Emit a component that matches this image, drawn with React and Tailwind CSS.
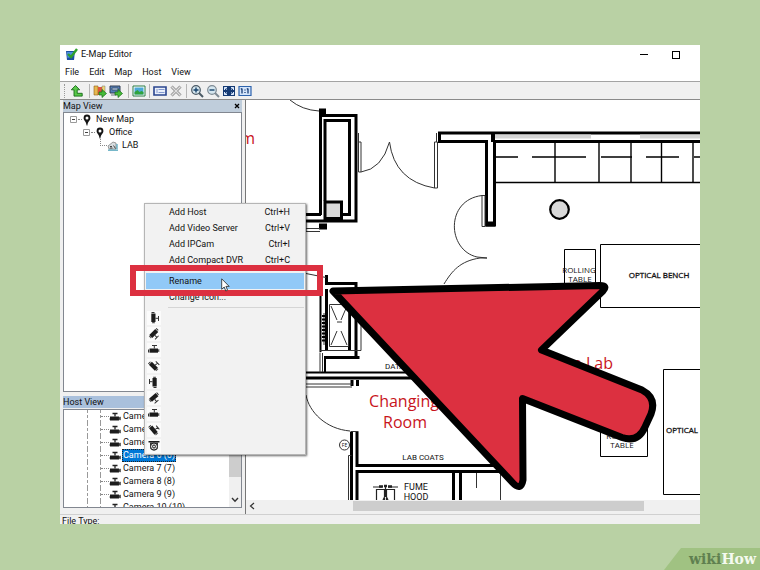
import React, { useState } from "react";

const MENUS = ["File", "Edit", "Map", "Host", "View"];

const HOST_ACTIONS = [
  { label: "Add Host", keys: "Ctrl+H" },
  { label: "Add Video Server", keys: "Ctrl+V" },
  { label: "Add IPCam", keys: "Ctrl+I" },
  { label: "Add Compact DVR", keys: "Ctrl+C" },
];

const CAMERA_ANGLES = [90, 135, 0, 45, -90, 140, 0, 50];

const CAMERAS = [3, 4, 5, 6, 7, 8, 9, 10];

function AppIcon() {
  return (
    <svg viewBox="0 0 13 13" className="h-[13px] w-[13px]">
      <path d="M1 3h9l-1 9H2z" fill="#1d4fa3" />
      <path d="M2 4l7 0-.5 4-6 2z" fill="#4b8fe0" />
      <path d="M3 6l3 3 6-8" fill="none" stroke="#2fa02c" strokeWidth="2.4" />
    </svg>
  );
}

function PinIcon() {
  return (
    <svg viewBox="0 0 8 12" className="h-3 w-2 shrink-0">
      <path d="M4 .5a3.4 3.4 0 0 1 3.4 3.4C7.4 6.500 4.600 7.500 4.400 11.500h-.8C3.400 7.500.6 6.500.6 3.900A3.400 3.400 0 0 1 4 .5z" fill="#151515" />
      <circle cx="4" cy="3.900" r="1.500" fill="#fff" />
    </svg>
  );
}

function LabIcon() {
  return (
    <svg viewBox="0 0 12 10" className="h-[10px] w-3 shrink-0">
      <path d="M1 5l5-4 3 1v6H2z" fill="#d8dde0" stroke="#777" strokeWidth=".7" />
      <path d="M3 5.500h2M3 7h2.500M6.500 4.500l2 3" stroke="#444" strokeWidth="1" />
      <path d="M1 9.200h10M10 3v5" stroke="#4aa0b8" strokeWidth="1.200" />
    </svg>
  );
}

function HostCamera() {
  return (
    <svg viewBox="0 0 12 10" className="h-[10px] w-3 shrink-0">
      <path d="M3.500 1.500h5M6 1.500v3" stroke="#222" strokeWidth="1.300" />
      <path d="M1 4.500h9v4H1z" fill="#1c1c1c" />
      <path d="M10 5.500l1.500-.5v3L10 7.500zM0 7h1" fill="#444" stroke="#444" strokeWidth=".6" />
    </svg>
  );
}

function MenuCamera({ angle }) {
  return (
    <svg viewBox="0 0 14 14" className="h-3.5 w-3.5">
      <rect width="14" height="14" fill="#fbfbfb" />
      <g transform={`rotate(${angle} 7 7)`}>
        <path d="M5 2.500h5M7.300 2.500v3M1.500 6.500v3" stroke="#333" strokeWidth="1" />
        <path d="M2.500 5.500h8.500v4.200H2.500z" fill="#1c1c1c" />
        <path d="M11 6.500l1.300-.6v3.200L11 8.700z" fill="#555" />
      </g>
    </svg>
  );
}

function DomeCamera() {
  return (
    <svg viewBox="0 0 14 14" className="h-3.5 w-3.5">
      <rect width="14" height="14" fill="#fbfbfb" />
      <path d="M1.500 2h11v1.500h-11z" fill="#1c1c1c" />
      <path d="M3 3.500h8v4a4 4 0 0 1-8 0z" fill="#333" />
      <circle cx="7" cy="7.500" r="3.500" fill="#ddd" stroke="#222" />
      <circle cx="7" cy="7.500" r="1.500" fill="none" stroke="#222" />
    </svg>
  );
}

function ToolButton({ label, children }) {
  return (
    <button type="button" aria-label={label} className="flex h-4 w-4 items-center justify-center">
      <svg viewBox="0 0 14 14" className="h-3.5 w-3.5">{children}</svg>
    </button>
  );
}

function Divider() {
  return <span className="mx-0.5 h-3.5 w-px bg-[#b5b5b5]" />;
}

function Toolbar() {
  return (
    <div className="flex h-[18px] items-center border-t border-[#a3a3a3] bg-[#f0f0f0] pl-1">
      <span className="mr-1 h-3.5 border-l border-dotted border-[#999]" />
      <ToolButton label="Up">
        <path d="M5.500 1.500l4.200 4.300H7.200V9.300h5v2.800H4V5.800H1.300z" fill="#58c848" stroke="#17691a" strokeWidth=".9" />
      </ToolButton>
      <span className="w-0.5" />
      <Divider />
      <ToolButton label="Add map">
        <path d="M1 2h4v9H1z" fill="#e6b84e" stroke="#8d5a19" strokeWidth=".6" />
        <path d="M5 3h4v8H5z" fill="#e0553b" />
        <path d="M9 2h3v6H9z" fill="#f0d774" stroke="#777" strokeWidth=".5" />
        <path d="M6 8h3V5.500l4.500 4-4.500 4V11H6z" fill="#46ba38" stroke="#146b16" strokeWidth=".7" />
      </ToolButton>
      <ToolButton label="Add host">
        <path d="M1 2h10v7H1z" fill="#5380b9" stroke="#333f55" />
        <path d="M3 4h6v2H3zM2 11h5" fill="#b7d1ee" stroke="#333f55" strokeWidth=".7" />
        <path d="M6 8h3V5.500l4.500 4-4.500 4V11H6z" fill="#46ba38" stroke="#146b16" strokeWidth=".7" />
      </ToolButton>
      <span className="w-0.5" />
      <Divider />
      <ToolButton label="Load picture">
        <path d="M1 2h12v10H1z" fill="#fff" stroke="#2b7d44" />
        <path d="M2.500 3.500h9v7h-9z" fill="#4aa9d8" />
        <path d="M2.500 10.500V8l3-2 2 2 2-1 2 1v2.500z" fill="#2fa33b" />
      </ToolButton>
      <Divider />
      <ToolButton label="Rename">
        <path d="M1 3h12v8H1z" fill="#e9effa" stroke="#2a458f" strokeWidth="1.600" />
        <path d="M4 5v4M5.500 5.500h6M5.500 8.500h6" stroke="#6984c4" strokeWidth=".8" />
      </ToolButton>
      <ToolButton label="Delete">
        <path d="M2.500 2.500l9 9M11.500 2.500l-9 9" stroke="#8c8c8c" strokeWidth="3" />
        <path d="M2.500 2.500l9 9M11.500 2.500l-9 9" stroke="#dedede" strokeWidth="1.400" />
      </ToolButton>
      <Divider />
      <ToolButton label="Zoom in">
        <circle cx="6" cy="6" r="4.300" fill="#d5e6ef" stroke="#4a5964" strokeWidth="1.200" />
        <path d="M9 9l4 4" stroke="#4a5964" strokeWidth="2" />
        <path d="M3.500 6h5M6 3.500v5" stroke="#17436b" strokeWidth="1.400" />
      </ToolButton>
      <ToolButton label="Zoom out">
        <circle cx="6" cy="6" r="4.300" fill="#d5e6ef" stroke="#7d8a93" strokeWidth="1.200" />
        <path d="M9 9l4 4" stroke="#7d8a93" strokeWidth="2" />
        <path d="M3.500 6h5" stroke="#17436b" strokeWidth="1.400" />
      </ToolButton>
      <ToolButton label="Fit to window">
        <path d="M1 2h12v10H1z" fill="#153a73" />
        <path d="M2.500 3.500l2.500 2M11.500 3.500l-2.500 2M2.500 10.500l2.500-2M11.500 10.500l-2.500-2M2.500 6V3.500H5M9 3.500h2.500V6M2.500 8v2.500H5M9 10.500h2.500V8" fill="none" stroke="#dcebff" strokeWidth="1" />
      </ToolButton>
      <ToolButton label="Actual size">
        <path d="M1 2.500h12v9H1z" fill="#d3e4fa" stroke="#2d63ad" strokeWidth="1.200" />
        <path d="M4 4.500v5M10 4.500v5M2.800 5.300L4 4.500M8.800 5.300l1.200-.8M7 5.500v1M7 8v1" stroke="#153a73" strokeWidth="1.300" />
      </ToolButton>
    </div>
  );
}

function Expander() {
  return (
    <svg viewBox="0 0 7 7" className="h-[7px] w-[7px] shrink-0">
      <path d="M.5.500h6v6h-6z" fill="#fff" stroke="#9a9a9a" />
      <path d="M2 3.500h3" stroke="#444" />
    </svg>
  );
}

function MapTree() {
  return (
    <ul className="min-h-0 flex-1 border border-[#828790] bg-white pl-1.5">
      <li className="flex h-[13px] items-center">
        <Expander />
        <span className="mx-px w-1 border-t border-dotted border-[#888]" />
        <PinIcon />
        <span className="ml-[5px]">New Map</span>
      </li>
      <li className="flex h-[13px] items-center pl-[13px]">
        <Expander />
        <span className="mx-px w-1 border-t border-dotted border-[#888]" />
        <PinIcon />
        <span className="ml-[5px]">Office</span>
      </li>
      <li className="flex h-[13px] items-center pl-[30px]">
        <span className="mb-1.5 h-[7px] w-[7px] border-b border-l border-dotted border-[#888]" />
        <LabIcon />
        <span className="ml-[3px]">LAB</span>
      </li>
    </ul>
  );
}

function HostTree() {
  const [selected, setSelected] = useState(6);

  return (
    <div className="flex h-[99px] border border-[#828790] bg-white">
      <ul className="min-w-0 flex-1 overflow-hidden pl-[23px]">
        {CAMERAS.map((n) => (
          <li key={n} className="flex h-[13px] items-center border-l border-dashed border-[#999] pl-3">
            <span className="flex h-[13px] items-center border-l border-dashed border-[#999]">
              <span className="w-2 border-t border-dotted border-[#888]" />
            </span>
            <HostCamera />
            <button
              type="button"
              onClick={() => setSelected(n)}
              className={
                n === selected
                  ? "ml-px h-[13px] border border-dotted border-[#222] bg-[#0078d7] leading-[11px] text-white"
                  : "ml-0.5 h-[13px] leading-[13px]"
              }
            >
              Camera {n} ({n})
            </button>
          </li>
        ))}
      </ul>
      <div className="flex w-3 flex-col items-center bg-[#f0f0f0]">
        <div className="h-[67px] w-full bg-[#cdcdcd]" />
        <svg viewBox="0 0 8 6" className="mt-auto mb-1 h-1.5 w-2">
          <path d="M1 1l3 3.300L7 1" fill="none" stroke="#333" strokeWidth="1.400" />
        </svg>
      </div>
    </div>
  );
}

function FloorPlan() {
  return (
    <svg viewBox="246 100 454 400" preserveAspectRatio="xMinYMin slice" className="min-h-0 w-full flex-1 bg-white" fontFamily='"Open Sans", sans-serif'>
      {/* thick walls */}
      <g fill="none" stroke="#000" strokeWidth="3">
        <path d="M320.500 110v105M306 214.500h15M321 115.500h35v105.500H306M341 214.500h8.500V120.500H325V201" />
        <path d="M319 111.500h7M319 226.500h8" strokeWidth="6" />
        <path d="M700 133H439.500v8.500H486.500V225h8V141.500H700" />
        <path d="M493 134v8" strokeWidth="4" />
        <path d="M486 224h9" strokeWidth="5" />
        <path d="M326.500 275v8.500H356v4M326.500 289v61M349.500 305v45M356 310v47M324 357.500h35.500" />
        <path d="M320.500 296v56M306 372.500h110M325 357v15" strokeWidth="2" />
        <path d="M306 378h115M357.500 380v6M352 380v6" />
        <path d="M351.500 432v69M357 432v33.500h160M357 501V471.500h160M453.500 471.500V501M460.500 471.500V501" />
      </g>
      <path d="M495 134.500h96v4h-96zM640 134.500h60v4h-60z" fill="#d4d4d4" />
      <rect x="325" y="202" width="16.500" height="16.500" fill="#d9d9d9" stroke="#000" strokeWidth="3" />
      <circle cx="559.500" cy="209.500" r="9.300" fill="#d9d9d9" stroke="#000" strokeWidth="2.200" />

      {/* doors and thin outlines */}
      <g fill="none" stroke="#333" strokeWidth="1">
        <path d="M290 100q12 10 29 11" />
        <path d="M358.500 133v39h2.500V142h-2.500M361 172q21-3 28.500-30M389.500 142q5 39 45 46M434.500 142h3v46h-3zM436.500 133v9" />
        <path d="M482 195.500h3v31h-3zM482 195.500C445 200 447 250 477 257l10 1h-7c-20 3-28 13-36 26" />
        <path d="M306 228.500h14M306 231.500h14M306 222v10M306 273.500l20 4" />
        <path d="M329.500 304.500h19v42h-19zM331 306l6 14M347 306l-6 14M331 345l6-14M347 345l-6-14M337 322h5" />
        <path d="M320 350.500h41V325M320 352.500v20M322.500 353v19M306 384h46M306 387h46M324 313v32" />
        <path d="M306 395c3 17 20 34 44 36M350.500 431.500h8M348.500 501V455.500h3M476.500 473v15M500.500 473v28" />
      </g>
      <path d="M323.500 315v28" stroke="#000" strokeWidth="3" strokeDasharray="2 1.500" />

      {/* cabinets along the wall */}
      <g fill="none" stroke="#000" strokeWidth="1.400">
        <path d="M496 182.500h204M555 143v39M599 143v39M631 143v39M661.500 143v39M693 143v39" />
        <path d="M496 157h22M532 157h54M601 157h31M646 157h33M694 157h6" />
      </g>

      {/* benches and tables */}
      <g fill="none" stroke="#000" strokeWidth="1">
        <path d="M564.500 249.500h31v45h-31zM600.500 244.500h110v63h-110zM600.500 420.500h47v36h-47zM663.500 369.500h50v125h-50z" />
      </g>

      {/* fume hood fittings */}
      <g fill="none" stroke="#222" strokeWidth="1.200">
        <path d="M373 487h9M388 487h10M376.500 501v-11.500h8V501M386.500 501v-11.500h8V501M385.500 487v8l-2.500 5M385.500 495l2.500 5" />
        <path d="M379 486.500h4M384 486h3M388 486.500h4" strokeWidth="2.600" />
      </g>
      <circle cx="344.500" cy="445" r="5" fill="#fff" stroke="#333" />

      <g fill="#111" textAnchor="middle" fontSize="8">
        <text x="344.500" y="447" fontSize="5">FE</text>
        <text x="579" y="273">ROLLING</text>
        <text x="580" y="282">TABLE</text>
        <text x="623" y="439">ROLLING</text>
        <text x="622" y="448">TABLE</text>
        <g stroke="#111" strokeWidth=".3">
          <text x="659" y="278">OPTICAL BENCH</text>
          <text x="666" y="433" textAnchor="start">OPTICAL BENCH</text>
        </g>
        <g fontFamily="Roboto, sans-serif">
          <text x="423" y="460">LAB COATS</text>
          <text x="385" y="369" textAnchor="start">DATA</text>
          <text x="416" y="490" fontSize="9">FUME</text>
          <text x="416" y="500" fontSize="9">HOOD</text>
        </g>
      </g>
      <g fill="#c8141c" fontSize="16">
        <text x="255" y="144" textAnchor="end">Room</text>
        <text x="404" y="407" textAnchor="middle">Changing</text>
        <text x="405" y="428" textAnchor="middle">Room</text>
        <text x="613" y="369" textAnchor="end">n Lab</text>
      </g>
    </svg>
  );
}

function ContextMenu() {
  const row = "flex h-4 w-full items-center justify-between pr-3.5 pl-[23px]";

  return (
    <div className="absolute top-[203px] left-[144px] w-[162px] border border-[#b5b5b5] bg-[#f2f2f2] px-px shadow-[1px_1px_2px_rgba(0,0,0,0.6)]">
      {HOST_ACTIONS.map((item) => (
        <button key={item.label} type="button" className={row}>
          <span>{item.label}</span>
          <span>{item.keys}</span>
        </button>
      ))}
      <hr className="my-0.5 ml-[22px] border-[#d5d5d5]" />
      <button type="button" className="flex h-4 w-full items-center bg-[#91c9f7] pl-[23px]">
        Rename
      </button>
      <button type="button" className={row}>
        Change Icon...
      </button>
      <hr className="my-0.5 ml-[22px] border-[#d5d5d5]" />
      {CAMERA_ANGLES.map((angle, i) => (
        <button key={i} type="button" aria-label={`Camera icon ${i + 1}`} className="flex h-4 w-full items-center pl-px">
          <MenuCamera angle={angle} />
        </button>
      ))}
      <button type="button" aria-label="Dome icon" className="flex h-4 w-full items-center pl-px">
        <DomeCamera />
      </button>
    </div>
  );
}

// highlight frame, mouse pointer and the big arrow that lie over the window
function Callout() {
  return (
    <>
      <div className="absolute top-[265px] left-[130px] h-[31px] w-[193px] border-[6px] border-[#dc3040]" />
      <svg viewBox="0 0 9 14" className="absolute top-[278px] left-[221px] h-3.5 w-[9px]">
        <path d="M.7.800v10.500l2.500-2.300 1.600 4 1.800-.8-1.700-3.800h3.300z" fill="#fff" stroke="#222" strokeWidth=".8" />
      </svg>
      <svg viewBox="320 270 345 230" className="absolute top-[270px] left-[320px] h-[230px] w-[345px]">
        <path
          d="M333 291L600 285.500Q608 285.500 603 291L541.500 350L642 390Q657 398 651 414L645 427Q638 443 622 437.500L522.500 398.500L523 480Q521 492 512 482Z"
          fill="#dc3040"
          stroke="#000"
          strokeWidth="7"
          strokeLinejoin="round"
        />
      </svg>
    </>
  );
}

export default function App() {
  return (
    <div className="relative flex h-screen flex-col overflow-hidden bg-[#b9d1a4] px-[60px] pt-[45px] pb-[46px] font-[Roboto,sans-serif] text-[9px] leading-[13px] text-[#111]">
      <main className="flex min-h-0 flex-1 flex-col overflow-hidden bg-[#f0f0f0]">
        <header className="bg-white">
          <div className="flex h-[19px] items-center pl-[5px]">
            <AppIcon />
            <h1 className="ml-[3px]">E-Map Editor</h1>
            <div className="ml-auto flex items-center gap-6 pr-5">
              <button type="button" aria-label="Minimize" className="h-px w-2 bg-black" />
              <button type="button" aria-label="Maximize" className="h-2 w-2 border border-black" />
            </div>
          </div>
          <nav className="flex h-[17px] items-center gap-2.5 pl-[5px]">
            {MENUS.map((m) => (
              <button key={m} type="button">{m}</button>
            ))}
          </nav>
        </header>
        <Toolbar />

        <div className="flex min-h-0 flex-1 border-t border-[#8a8a8a]">
          <aside className="flex w-[185px] flex-col px-[3px] pb-1.5">
            <div className="flex h-3 items-center justify-between bg-[#bfcddb] pr-0.5">
              <h2>Map View</h2>
              <button type="button" aria-label="Close map view">
                <svg viewBox="0 0 6 6" className="h-1.5 w-1.5">
                  <path d="M1 1l4 4M5 1L1 5" stroke="#000" strokeWidth="1.300" />
                </svg>
              </button>
            </div>
            <MapTree />
            <h2 className="mt-1 mb-px h-3 bg-[#a9c0dc] leading-3">Host View</h2>
            <HostTree />
          </aside>

          <section className="flex min-w-0 flex-1 flex-col border-l border-[#777]">
            <FloorPlan />
            <div className="flex h-3 items-center bg-[#f0f0f0]">
              <svg viewBox="0 0 6 8" className="ml-[3px] h-2 w-1.5">
                <path d="M5 1L1.500 4 5 7" fill="none" stroke="#333" strokeWidth="1.200" />
              </svg>
              <div className="ml-[98px] h-2.5 w-[64%] bg-[#cdcdcd]" />
            </div>
            <div className="h-0.5" />
          </section>
        </div>
        <footer className="h-2.5 overflow-hidden border-t border-[#d0d0d0] pl-0.5 leading-[13px]">File Type:</footer>
      </main>

      <ContextMenu />
      <Callout />

      <div className="absolute right-0 bottom-0 flex h-[22px] w-24 items-center justify-end bg-[#a0c282] pr-1 font-['DejaVu_Serif',serif] text-sm leading-none font-bold text-[#5f8050] [clip-path:polygon(17px_0,100%_0,100%_100%,0_100%)]">
        wiki<span className="text-[#f5faf0]">How</span>
      </div>
    </div>
  );
}
